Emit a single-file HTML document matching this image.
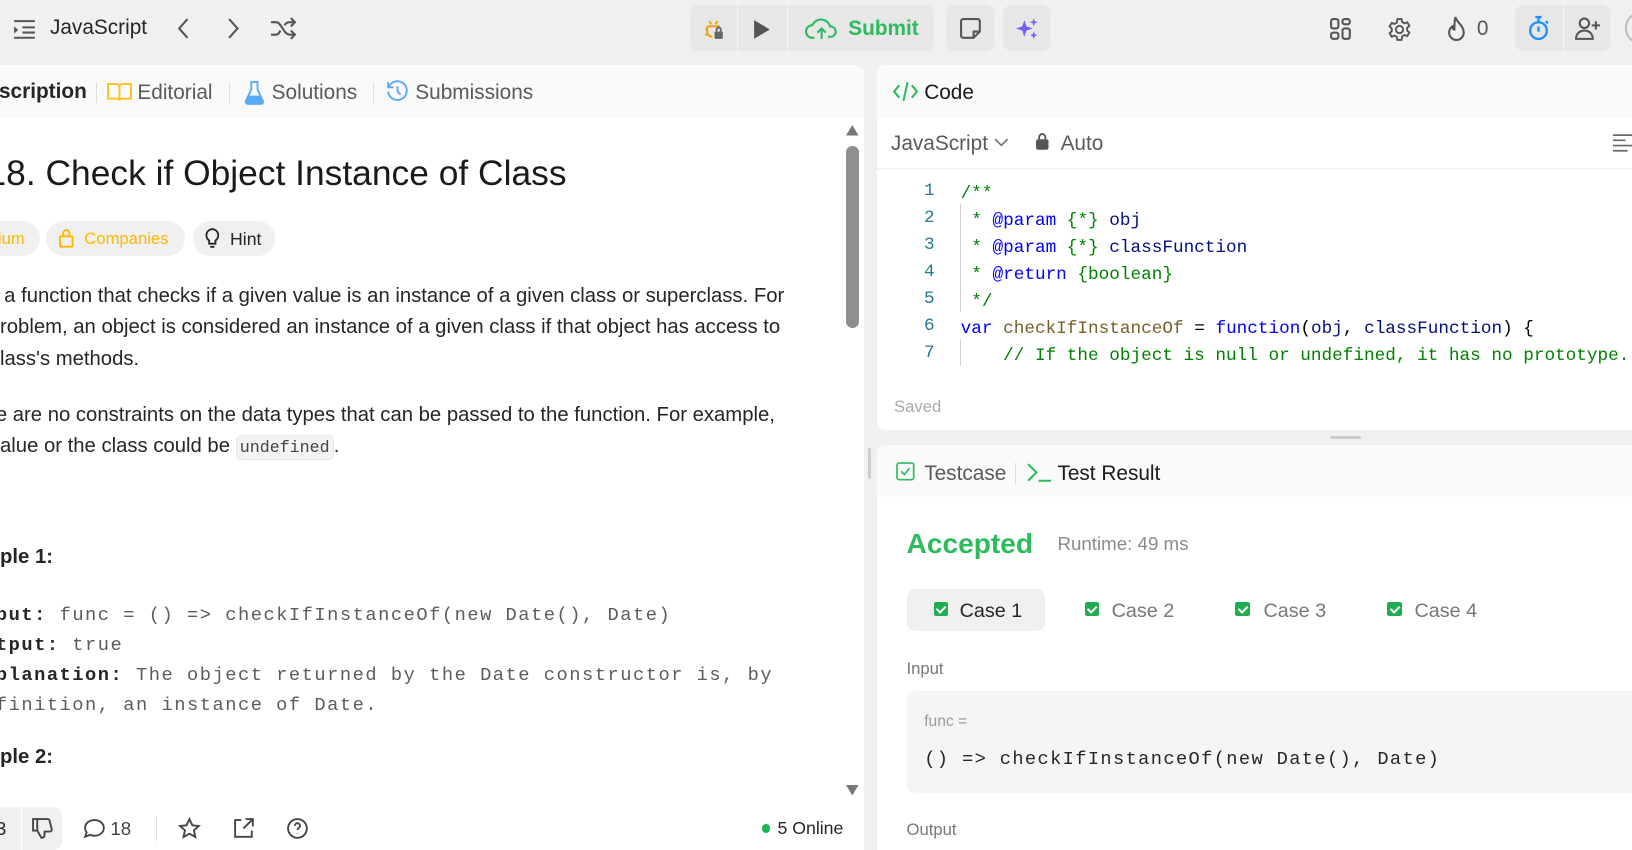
<!DOCTYPE html>
<html><head><meta charset="utf-8">
<style>
html,body{margin:0;padding:0;}
body{width:1632px;height:850px;overflow:hidden;background:#f0f0f0;font-family:"Liberation Sans",sans-serif;}
#w{position:absolute;left:0;top:0;width:1568px;height:817px;zoom:1.0408;overflow:hidden;background:#f0f0f0;}
.a{position:absolute;white-space:nowrap;}
.ic{position:absolute;}
.mono{font-family:"Liberation Mono",monospace;}
.panel{position:absolute;background:#fff;border-radius:8px;overflow:hidden;}
.tx{color:#262626;font-size:19.5px;}
.code{font-family:"Liberation Mono",monospace;font-size:17px;}
.ln{position:absolute;left:870px;width:28px;text-align:right;color:#237893;font-family:"Liberation Mono",monospace;font-size:17px;}
.pill{position:absolute;border-radius:20px;background:#f0f0f0;}
.cb{position:absolute;width:14px;height:14px;background:#1fae4f;border-radius:2px;}
.cb:after{content:"";position:absolute;left:4px;top:2px;width:4px;height:7px;border:solid #fff;border-width:0 2px 2px 0;transform:rotate(45deg);}
</style></head><body><div id="w">

<!-- top bar -->
<svg class="ic" style="left:12px;top:17px" width="24" height="22" viewBox="0 0 24 22" fill="none" stroke="#555" stroke-width="2"><path d="M2 3h20M10 9h12M10 14h12M2 19h20"/><path d="M2 8l4 3.5-4 3.5z" fill="#555" stroke="none"/></svg>
<div class="a" style="left:48px;top:15px;font-size:20px;color:#262626;font-weight:500">JavaScript</div>
<svg class="ic" style="left:168px;top:16px" width="16" height="22" viewBox="0 0 16 22" fill="none" stroke="#555" stroke-width="2"><path d="M12 2L4 11l8 9"/></svg>
<svg class="ic" style="left:216px;top:16px" width="16" height="22" viewBox="0 0 16 22" fill="none" stroke="#555" stroke-width="2"><path d="M4 2l8 9-8 9"/></svg>
<svg class="ic" style="left:259px;top:16px" width="26" height="22" viewBox="0 0 26 22" fill="none" stroke="#555" stroke-width="2"><path d="M1 5h5c5 0 7 12 13 12h5M1 17h5c2 0 3-2 4-4M14 8c1-2 3-3 5-3h5M20 1l4 4-4 4M20 13l4 4-4 4"/></svg>

<div class="a" style="left:663px;top:5px;width:234px;height:44px;background:#e7e7e7;border-radius:8px"></div>
<div class="a" style="left:708px;top:5px;width:1px;height:44px;background:#f5f5f5"></div>
<div class="a" style="left:756px;top:5px;width:1px;height:44px;background:#f5f5f5"></div>
<svg class="ic" style="left:674px;top:16px" width="24" height="24" viewBox="0 0 24 24" fill="none" stroke="#f0a000" stroke-width="1.8"><path d="M8 4l2 3M16 4l-2 3M6 9h12M6 9v5c0 3 2 5 5 5M4 12h2M4 17h3"/><rect x="13" y="14" width="8" height="7" rx="1" fill="#666" stroke="none"/><path d="M15 14v-2a2 2 0 014 0v2" stroke="#666"/></svg>
<svg class="ic" style="left:722px;top:17px" width="20" height="22" viewBox="0 0 20 22"><path d="M3 2l15 9-15 9z" fill="#555"/></svg>
<svg class="ic" style="left:773px;top:16px" width="32" height="24" viewBox="0 0 32 24" fill="none" stroke="#2cbb5d" stroke-width="2"><path d="M9 20H7a6 6 0 010-12 9 9 0 0117 1 5 5 0 011 10h-3"/><path d="M16 21v-9M12 15l4-4 4 4"/></svg>
<div class="a" style="left:815px;top:16px;font-size:20px;color:#2cbb5d;font-weight:bold">Submit</div>
<div class="a" style="left:909px;top:5px;width:46px;height:44px;background:#e7e7e7;border-radius:8px"></div>
<svg class="ic" style="left:921px;top:16px" width="22" height="22" viewBox="0 0 22 22" fill="none" stroke="#555" stroke-width="2"><path d="M4 2h14a2 2 0 012 2v10l-6 6H4a2 2 0 01-2-2V4a2 2 0 012-2zM14 20v-6h6"/></svg>
<div class="a" style="left:964px;top:5px;width:45px;height:44px;background:#e7e7e7;border-radius:8px"></div>
<svg class="ic" style="left:975px;top:15px" width="24" height="24" viewBox="0 0 24 24" fill="#7b5cf0"><path d="M9 4l2 6 6 2-6 2-2 6-2-6-6-2 6-2z"/><path d="M18 2l1 3 3 1-3 1-1 3-1-3-3-1 3-1zM18 15l1 2.5 2.5 1-2.5 1-1 2.5-1-2.5-2.5-1 2.5-1z"/></svg>

<svg class="ic" style="left:1277px;top:16px" width="22" height="24" viewBox="0 0 22 24" fill="none" stroke="#555" stroke-width="2"><rect x="2" y="2" width="7" height="9" rx="2"/><rect x="13" y="2" width="7" height="5" rx="2"/><rect x="2" y="15" width="7" height="6" rx="2"/><rect x="13" y="11" width="7" height="10" rx="2"/></svg>
<svg class="ic" style="left:1333px;top:16px" width="24" height="24" viewBox="0 0 24 24" fill="none" stroke="#555" stroke-width="1.8"><circle cx="12" cy="12" r="3.5"/><path d="M10 2h4l.6 2.8 2.2 1.3 2.7-1 2 3.4-2.1 1.9v2.6l2.1 1.9-2 3.4-2.7-1-2.2 1.3L14 22h-4l-.6-2.8-2.2-1.3-2.7 1-2-3.4 2.1-1.9v-2.6L2.5 9.1l2-3.4 2.7 1 2.2-1.3z"/></svg>
<svg class="ic" style="left:1388px;top:14px" width="22" height="26" viewBox="0 0 22 26" fill="none" stroke="#555" stroke-width="2"><path d="M10 2c1 5 8 8 8 15a7 7 0 01-14 0c0-3 1.5-5 3-6 0 2 1 3 2 3 0-4 0-8 1-12z"/></svg>
<div class="a" style="left:1419px;top:16px;font-size:20px;color:#555">0</div>
<div class="a" style="left:1456px;top:5px;width:91px;height:44px;background:#e7e7e7;border-radius:8px"></div>
<div class="a" style="left:1502px;top:5px;width:1px;height:44px;background:#f5f5f5"></div>
<svg class="ic" style="left:1466px;top:14px" width="24" height="26" viewBox="0 0 24 26" fill="none" stroke="#1a90ff" stroke-width="2.2"><circle cx="12" cy="15" r="8"/><path d="M9 2h6M12 2v5M12 11v5M19 6l2 2"/></svg>
<svg class="ic" style="left:1512px;top:15px" width="26" height="24" viewBox="0 0 26 24" fill="none" stroke="#555" stroke-width="2"><circle cx="10" cy="7" r="4.5"/><path d="M2 22c0-5 3.5-8 8-8s8 3 8 8zM21 5v8M17 9h8"/></svg>
<div class="a" style="left:1561px;top:12px;width:30px;height:30px;border-radius:50%;border:2px solid #bbb;box-sizing:border-box"></div>

<!-- left panel -->
<div class="panel" style="left:-10px;top:62px;width:840px;height:770px">
  <div class="a" style="left:0;top:0;width:840px;height:51px;background:#fafafa"></div>
</div>
<div class="a" style="left:-1px;top:77px;font-size:20px;color:#262626;font-weight:600">scription</div>
<div class="a" style="left:92px;top:79px;width:1px;height:20px;background:#ddd"></div>
<svg class="ic" style="left:103px;top:79px" width="24" height="20" viewBox="0 0 24 20" fill="none" stroke="#ffc01e" stroke-width="1.8"><path d="M1 2h8a3 3 0 013 3v13a2 2 0 00-2-2H1zM23 2h-8a3 3 0 00-3 3v13a2 2 0 012-2h9z"/></svg>
<div class="a" style="left:132px;top:78px;font-size:20px;color:#5a5a5a">Editorial</div>
<div class="a" style="left:220px;top:79px;width:1px;height:20px;background:#ddd"></div>
<svg class="ic" style="left:234px;top:77px" width="20" height="24" viewBox="0 0 20 24"><path d="M6 2h8M7 2v7L2 20a2 2 0 002 3h12a2 2 0 002-3L13 9V2" fill="none" stroke="#5aa9f5" stroke-width="1.8"/><path d="M4 15h12l2.5 5a2 2 0 01-2 3h-13a2 2 0 01-2-3z" fill="#5aa9f5"/></svg>
<div class="a" style="left:261px;top:78px;font-size:20px;color:#5a5a5a">Solutions</div>
<div class="a" style="left:358px;top:79px;width:1px;height:20px;background:#ddd"></div>
<svg class="ic" style="left:371px;top:77px" width="22" height="22" viewBox="0 0 22 22" fill="none" stroke="#5aa9f5" stroke-width="1.8"><path d="M3 6a9 9 0 11-1 5M2 2v5h5M11 6v5l3 3"/></svg>
<div class="a" style="left:399px;top:78px;font-size:20px;color:#5a5a5a">Submissions</div>

<div class="a" style="left:-13px;top:148px;font-size:34px;color:#1a1a1a;font-weight:500">18. Check if Object Instance of Class</div>

<div class="pill" style="left:-30px;top:212px;width:68px;height:34px"></div>
<div class="a" style="left:-2px;top:220px;font-size:16px;color:#ffb800">ium</div>
<div class="pill" style="left:44px;top:212px;width:134px;height:34px"></div>
<svg class="ic" style="left:56px;top:219px" width="16" height="20" viewBox="0 0 16 20" fill="none" stroke="#ffb800" stroke-width="1.8"><rect x="2" y="8" width="12" height="10" rx="1"/><path d="M5 8V5a3 3 0 016 0v3"/></svg>
<div class="a" style="left:81px;top:220px;font-size:16px;color:#ffb800">Companies</div>
<div class="pill" style="left:185px;top:212px;width:79px;height:34px"></div>
<svg class="ic" style="left:196px;top:218px" width="16" height="22" viewBox="0 0 16 22" fill="none" stroke="#262626" stroke-width="1.8"><path d="M8 2a6 6 0 00-3 11v3h6v-3A6 6 0 008 2zM6 19h4"/></svg>
<div class="a" style="left:221px;top:220px;font-size:17px;color:#262626">Hint</div>

<div class="a tx" style="left:4px;top:274px">a function that checks if a given value is an instance of a given class or superclass. For</div>
<div class="a tx" style="left:0;top:304px">roblem, an object is considered an instance of a given class if that object has access to</div>
<div class="a tx" style="left:0;top:334px">lass's methods.</div>
<div class="a tx" style="left:-4px;top:388px">e are no constraints on the data types that can be passed to the function. For example,</div>
<div class="a tx" style="left:0;top:418px">alue or the class could be <span class="mono" style="font-size:16px;background:#f3f3f3;border:1px solid #e8e8e8;border-radius:5px;padding:2px 3px;color:#444">undefined</span>.</div>

<div class="a tx" style="left:0;top:525px;font-weight:bold">ple 1:</div>
<div class="a mono" style="left:-4px;top:576px;font-size:18px;letter-spacing:1.45px;color:#5c5c5c;line-height:29px">
<b style="color:#262626">put:</b> func = () =&gt; checkIfInstanceOf(new Date(), Date)<br>
<b style="color:#262626">tput:</b> true<br>
<b style="color:#262626">planation:</b> The object returned by the Date constructor is, by<br>
finition, an instance of Date.</div>
<div class="a tx" style="left:0;top:717px;font-weight:bold">ple 2:</div>

<!-- scrollbar -->
<svg class="ic" style="left:812px;top:119px" width="14" height="12" viewBox="0 0 14 12"><path d="M7 1l6 10H1z" fill="#777"/></svg>
<div class="a" style="left:813px;top:140px;width:12px;height:175px;background:#8f8f8f;border-radius:6px"></div>
<svg class="ic" style="left:812px;top:753px" width="14" height="12" viewBox="0 0 14 12"><path d="M7 11l6-10H1z" fill="#777"/></svg>

<!-- bottom bar -->
<div class="a" style="left:0;top:775px;width:60px;height:42px;background:#f0f0f0;border-radius:0 8px 8px 0"></div>
<div class="a" style="left:20px;top:775px;width:1px;height:42px;background:#fff"></div>
<div class="a" style="left:-4px;top:786px;font-size:18px;color:#262626">3</div>
<svg class="ic" style="left:30px;top:785px" width="22" height="22" viewBox="0 0 22 22" fill="none" stroke="#444" stroke-width="1.8"><path d="M2 2h4v11H2zM6 13l4 7c2 0 3-1 3-3v-3h5a2 2 0 002-2l-2-8a2 2 0 00-2-2H6"/></svg>
<svg class="ic" style="left:80px;top:786px" width="22" height="20" viewBox="0 0 22 20" fill="none" stroke="#444" stroke-width="1.8"><path d="M11 2c5 0 9 3 9 7.5S16 17 11 17c-1.5 0-3-.3-4-.8L2 18l1.5-4C2.5 12.5 2 11 2 9.5 2 5 6 2 11 2z"/></svg>
<div class="a" style="left:106px;top:786px;font-size:18px;color:#444">18</div>
<div class="a" style="left:150px;top:784px;width:1px;height:24px;background:#ddd"></div>
<svg class="ic" style="left:171px;top:785px" width="22" height="22" viewBox="0 0 22 22" fill="none" stroke="#444" stroke-width="1.8"><path d="M11 2l2.8 6 6.2.6-4.7 4.2 1.4 6.4L11 16l-5.7 3.2 1.4-6.4L2 8.6 8.2 8z"/></svg>
<svg class="ic" style="left:223px;top:785px" width="22" height="22" viewBox="0 0 22 22" fill="none" stroke="#444" stroke-width="1.8"><path d="M9 3H3v16h16v-6M13 2h7v7M20 2l-9 9"/></svg>
<svg class="ic" style="left:275px;top:785px" width="22" height="22" viewBox="0 0 22 22" fill="none" stroke="#444" stroke-width="1.8"><circle cx="11" cy="11" r="9"/><path d="M8.5 8.5a2.5 2.5 0 015 0c0 2-2.5 2-2.5 4M11 15.5v.5"/></svg>
<div class="a" style="left:732px;top:792px;width:8px;height:8px;border-radius:50%;background:#1db954"></div>
<div class="a" style="left:747px;top:786px;font-size:17px;color:#262626">5 Online</div>

<!-- code panel -->
<div class="panel" style="left:843px;top:62px;width:740px;height:351px">
  <div class="a" style="left:0;top:0;width:740px;height:51px;background:#fafafa"></div>
  <div class="a" style="left:0;top:99px;width:740px;height:1px;background:#eee"></div>
</div>
<svg class="ic" style="left:857px;top:76px" width="26" height="24" viewBox="0 0 26 24" fill="none" stroke="#2cbb5d" stroke-width="2"><path d="M7 6l-5 6 5 6M19 6l5 6-5 6M15 3l-4 18"/></svg>
<div class="a" style="left:888px;top:78px;font-size:20px;color:#1a1a1a;font-weight:500">Code</div>
<div class="a" style="left:856px;top:127px;font-size:20px;color:#5a5a5a">JavaScript</div>
<svg class="ic" style="left:954px;top:131px" width="16" height="12" viewBox="0 0 16 12" fill="none" stroke="#777" stroke-width="1.6"><path d="M2 3l6 6 6-6"/></svg>
<svg class="ic" style="left:994px;top:127px" width="14" height="18" viewBox="0 0 14 18"><rect x="1" y="7" width="12" height="10" rx="2" fill="#555"/><path d="M4 7V5a3 3 0 016 0v2" fill="none" stroke="#555" stroke-width="1.8"/></svg>
<div class="a" style="left:1019px;top:127px;font-size:20px;color:#5a5a5a">Auto</div>
<svg class="ic" style="left:1550px;top:127px" width="20" height="20" viewBox="0 0 20 20" fill="none" stroke="#666" stroke-width="1.6"><path d="M0 3h20M0 8h12M0 13h20M0 18h14"/></svg>

<div class="ln" style="top:174px">1</div><div class="ln" style="top:200px">2</div><div class="ln" style="top:226px">3</div><div class="ln" style="top:252px">4</div><div class="ln" style="top:278px">5</div><div class="ln" style="top:304px">6</div><div class="ln" style="top:330px">7</div>
<div class="a" style="left:922px;top:196px;width:1px;height:104px;background:#d0d0d0"></div>
<div class="a" style="left:922px;top:326px;width:1px;height:26px;background:#d0d0d0"></div>
<div class="a code" style="left:923px;top:174px;line-height:26px;color:#008000">/**<br>
&nbsp;* <span style="color:#0000ff">@param</span> {*} <span style="color:#001080">obj</span><br>
&nbsp;* <span style="color:#0000ff">@param</span> {*} <span style="color:#001080">classFunction</span><br>
&nbsp;* <span style="color:#0000ff">@return</span> {boolean}<br>
&nbsp;*/<br>
<span style="color:#0000ff">var</span> <span style="color:#795e26">checkIfInstanceOf</span> <span style="color:#000">=</span> <span style="color:#0000ff">function</span><span style="color:#000">(</span><span style="color:#001080">obj</span><span style="color:#000">, </span><span style="color:#001080">classFunction</span><span style="color:#000">) {</span><br>
&nbsp;&nbsp;&nbsp;&nbsp;// If the object is null or undefined, it has no prototype.</div>
<div class="a" style="left:859px;top:381px;font-size:16px;color:#aaa">Saved</div>
<div class="a" style="left:1278px;top:419px;width:30px;height:3px;background:#ccc;border-radius:2px"></div>
<div class="a" style="left:834px;top:430px;width:3px;height:30px;background:#ccc;border-radius:2px"></div>

<!-- testcase panel -->
<div class="panel" style="left:843px;top:428px;width:740px;height:400px">
  <div class="a" style="left:0;top:0;width:740px;height:50px;background:#fafafa"></div>
</div>
<svg class="ic" style="left:861px;top:444px" width="18" height="18" viewBox="0 0 18 18" fill="none" stroke="#2cbb5d" stroke-width="1.6"><rect x="1" y="1" width="16" height="16" rx="2"/><path d="M5 9l3 3 5-6"/></svg>
<div class="a" style="left:888px;top:444px;font-size:20px;color:#5a5a5a">Testcase</div>
<div class="a" style="left:975px;top:445px;width:1px;height:20px;background:#ddd"></div>
<svg class="ic" style="left:986px;top:444px" width="26" height="20" viewBox="0 0 26 20" fill="none" stroke="#2cbb5d" stroke-width="2"><path d="M2 2l8 8-8 8M12 18h12"/></svg>
<div class="a" style="left:1016px;top:444px;font-size:20px;color:#1a1a1a;font-weight:500">Test Result</div>

<div class="a" style="left:871px;top:507px;font-size:27px;color:#2cbb5d;font-weight:600">Accepted</div>
<div class="a" style="left:1016px;top:512px;font-size:18px;color:#8a8a8a">Runtime: 49 ms</div>

<div class="a" style="left:871px;top:566px;width:133px;height:40px;background:#f0f0f0;border-radius:8px"></div>
<div class="cb" style="left:897px;top:578px"></div>
<div class="a" style="left:922px;top:576px;font-size:19px;color:#262626">Case 1</div>
<div class="cb" style="left:1042px;top:578px"></div>
<div class="a" style="left:1068px;top:576px;font-size:19px;color:#777">Case 2</div>
<div class="cb" style="left:1187px;top:578px"></div>
<div class="a" style="left:1214px;top:576px;font-size:19px;color:#777">Case 3</div>
<div class="cb" style="left:1333px;top:578px"></div>
<div class="a" style="left:1359px;top:576px;font-size:19px;color:#777">Case 4</div>

<div class="a" style="left:871px;top:633px;font-size:16px;color:#777">Input</div>
<div class="a" style="left:871px;top:664px;width:720px;height:98px;background:#f5f5f5;border-radius:8px"></div>
<div class="a" style="left:888px;top:685px;font-size:15px;color:#999">func =</div>
<div class="a mono" style="left:888px;top:719px;font-size:18px;letter-spacing:1.3px;color:#262626">() =&gt; checkIfInstanceOf(new Date(), Date)</div>
<div class="a" style="left:871px;top:788px;font-size:16px;color:#777">Output</div>

</div></body></html>
